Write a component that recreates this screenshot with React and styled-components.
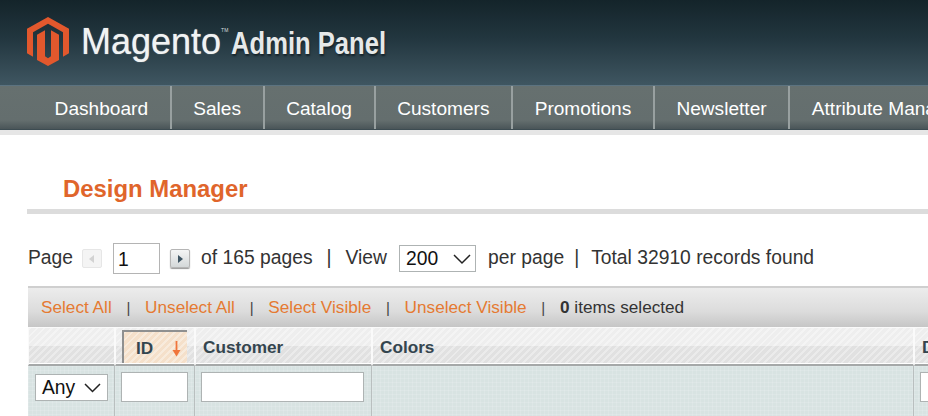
import React from 'react';
import styled, { createGlobalStyle } from 'styled-components';

const GlobalStyle = createGlobalStyle`
  html, body {
    margin: 0;
    padding: 0;
    background: #fff;
    overflow: hidden;
  }
  body {
    font-family: "Liberation Sans", Arial, sans-serif;
    color: #2f2f2f;
  }
`;

const Page = styled.div`
  width: 928px;
  height: 416px;
  overflow: hidden;
`;

const Header = styled.header`
  display: flex;
  align-items: flex-start;
  height: 86px;
  padding: 17px 0 0 27px;
  box-sizing: border-box;
  background: linear-gradient(180deg, #14242a 0%, #22363f 45%, #3f5661 100%);
  border-bottom: 1px solid #5c7380;
`;

const LogoMark = styled.svg`
  width: 42px;
  height: 49px;
  flex: none;
`;

const Brand = styled.span`
  margin: 3px 0 0 12px;
  font-size: 36px;
  line-height: 44px;
  color: #f1f3f3;
  text-shadow: 0 0 1px rgba(255, 255, 255, 0.7);
`;

const Tm = styled.sup`
  font-size: 5px;
  line-height: 0;
  vertical-align: 22px;
  color: #d7dcdc;
  text-shadow: none;
`;

const Product = styled.span`
  display: inline-block;
  margin: 4px 0 0 3px;
  font-weight: 700;
  font-size: 32px;
  line-height: 44px;
  color: #e6e9e9;
  text-shadow: 1px 2px 2px #16232a;
  white-space: nowrap;
  transform: scaleX(0.8);
  transform-origin: left center;
`;

const Nav = styled.nav`
  display: flex;
  height: 44px;
  padding-left: 33px;
  box-sizing: border-box;
  background: linear-gradient(180deg, #66706f 0%, #646e6e 80%, #4a5558 100%);
  border-bottom: 1px solid #3d4c52;
  overflow: hidden;
`;

const NavItem = styled.div`
  flex: none;
  padding: 0 21.6px;
  line-height: 45px;
  font-size: 19.1px;
  color: #fff;
  white-space: nowrap;
  border-right: ${({ $last }) => ($last ? '0' : '2px solid #98a0a0')};
`;

const Strip = styled.div`
  height: 5px;
  background: #e6e6e6;
`;

const Content = styled.main`
  padding: 38px 0 0 27px;
`;

const TitleBar = styled.div`
  height: 36px;
  padding-left: 36px;
  border-bottom: 5px solid #dcdcdc;
`;

const Title = styled.h1`
  margin: 0;
  font-size: 23.9px;
  line-height: 32px;
  font-weight: 700;
  color: #e0652b;
`;

const Pager = styled.div`
  display: flex;
  align-items: center;
  height: 31px;
  margin-top: 29px;
  padding-left: 1px;
  font-size: 19.3px;
  color: #333;
  white-space: nowrap;
`;

const PagerText = styled.span`
  margin-left: ${({ $left }) => $left || 0}px;
  position: relative;
  top: -1px;
`;

const PageButton = styled.div`
  display: flex;
  align-items: center;
  justify-content: center;
  width: 20px;
  height: 19px;
  margin-left: ${({ $left }) => $left}px;
  box-sizing: border-box;
  border: 1px solid ${({ $disabled }) => ($disabled ? '#e6e6e6' : '#b5b5b5')};
  border-radius: 2px;
  background: ${({ $disabled }) =>
    $disabled ? '#f4f4f4' : 'linear-gradient(180deg, #f4f5f5, #d4d8d9)'};
  box-shadow: ${({ $disabled }) => ($disabled ? 'none' : '0 1px 1px #999')};
`;

const Triangle = styled.svg`
  width: 8px;
  height: 8px;
`;

const PageInput = styled.div`
  width: 47px;
  height: 31px;
  margin-left: 11px;
  padding-left: 4px;
  box-sizing: border-box;
  border: 1px solid #b4b4b4;
  font-size: 19.3px;
  line-height: 31px;
  color: #111;
`;

const Select = styled.div`
  display: flex;
  align-items: center;
  justify-content: space-between;
  width: ${({ $width }) => $width}px;
  height: 27px;
  margin-left: ${({ $left }) => $left || 0}px;
  padding: 0 ${({ $pad }) => $pad}px 0 6px;
  box-sizing: border-box;
  border: 1px solid #aeb3b3;
  background: #fff;
  font-size: 19.3px;
  color: #111;
`;

const Chevron = styled.svg`
  width: ${({ $small }) => ($small ? 17 : 20)}px;
  height: 12px;
  flex: none;
`;

const Table = styled.section`
  display: grid;
  grid-template-columns: 87px 80px 177px 542px 1fr;
  grid-template-rows: 41px 39px 52px;
  margin-top: 12px;
  margin-left: 1px;
`;

const Toolbar = styled.div`
  grid-column: 1 / -1;
  display: flex;
  align-items: center;
  padding: 0 0 0 13px;
  box-sizing: border-box;
  gap: 14.75px;
  border-top: 2px solid #cfcfcf;
  background: linear-gradient(180deg, #ececec 0%, #dcdcdc 60%, #c6c6c6 100%);
  font-size: 17.2px;
  white-space: nowrap;
`;

const ToolLink = styled.span`
  color: #e57a32;
`;

const Sep = styled.span`
  color: #444;
  font-size: 15px;
`;

const Count = styled.span`
  color: #333;
  b {
    font-weight: 700;
  }
`;

const hatch = `repeating-linear-gradient(135deg, rgba(255,255,255,.35) 0 2px, rgba(255,255,255,0) 2px 5px)`;

const HeadCell = styled.div`
  display: flex;
  align-items: center;
  padding: 3px ${({ $first }) => ($first ? 0 : 7)}px 0;
  box-sizing: border-box;
  border: 1px solid #fafafa;
  border-bottom: 2px solid #a5a8a8;
  box-shadow: inset 0 -1px 0 #fff;
  background: ${hatch}, linear-gradient(180deg, #eeeeee 0 50%, #e1e1e1 50% 100%);
  font-size: 17.2px;
  font-weight: 700;
  color: #34454f;
  white-space: nowrap;
  overflow: hidden;
`;

const SortCell = styled(HeadCell)`
  padding: 2px 7px 1px 6px;
`;

const SortBox = styled.div`
  display: flex;
  align-items: center;
  justify-content: space-between;
  width: 100%;
  height: 100%;
  padding: 2px 6px 0 12px;
  box-sizing: border-box;
  border-top: 2px solid #8f9090;
  border-left: 2px solid #8f9090;
  background: ${hatch}, #f5e0ca;
`;

const SortArrow = styled.svg`
  width: 9px;
  height: 16px;
  flex: none;
`;

const FilterCell = styled.div`
  display: flex;
  align-items: flex-start;
  padding: ${({ $top }) => $top || 6}px 0 0 ${({ $left }) => $left || 6}px;
  box-sizing: border-box;
  border-right: ${({ $last }) => ($last ? '0' : '1px solid #b9bfbf')};
  background-color: #d8e3e2;
  background-image:
    linear-gradient(rgba(255, 255, 255, 0.12) 1px, transparent 1px),
    linear-gradient(90deg, rgba(255, 255, 255, 0.12) 1px, transparent 1px);
  background-size: 4px 4px;
`;

const FilterInput = styled.div`
  width: ${({ $width }) => $width}px;
  height: 30px;
  box-sizing: border-box;
  border: 1px solid #aeb3b3;
  background: #fff;
`;

const Arrow = ({ small }) => (
  <Chevron $small={small} viewBox={small ? '0 0 17 12' : '0 0 20 12'}>
    <path
      d={small ? 'M1 2 L8.5 9.5 L16 2' : 'M2 2 L10 10 L18 2'}
      fill="none"
      stroke="#222"
      strokeWidth="1.5"
    />
  </Chevron>
);

const navItems = ['Dashboard', 'Sales', 'Catalog', 'Customers', 'Promotions', 'Newsletter', 'Attribute Management'];
const toolLinks = ['Select All', 'Unselect All', 'Select Visible', 'Unselect Visible'];

const App = () => (
  <Page>
    <GlobalStyle />
    <Header>
      <LogoMark viewBox="0 0 42 50" preserveAspectRatio="none">
        <path fill="#e2582d" d="M21 0 L0 12 V37 L6 40.5 V15.5 L21 7 L36 15.5 V40.5 L42 37 V12 Z" />
        <path fill="#e2582d" d="M21 50 L10 44 V18 L18 13.5 V40 L21 42 L24 40 V13.5 L32 18 V44 Z" />
      </LogoMark>
      <Brand>Magento<Tm>TM</Tm></Brand>
      <Product>Admin Panel</Product>
    </Header>
    <Nav>
      {navItems.map((item, i) => (
        <NavItem key={item} $last={i === navItems.length - 1}>{item}</NavItem>
      ))}
    </Nav>
    <Strip />
    <Content>
      <TitleBar>
        <Title>Design Manager</Title>
      </TitleBar>
      <Pager>
        <PagerText>Page</PagerText>
        <PageButton $left={9} $disabled>
          <Triangle viewBox="0 0 8 8"><path d="M6 0 V8 L1 4 Z" fill="#d2d2d2" /></Triangle>
        </PageButton>
        <PageInput>1</PageInput>
        <PageButton $left={10}>
          <Triangle viewBox="0 0 8 8"><path d="M2 0 V8 L7 4 Z" fill="#3e5563" /></Triangle>
        </PageButton>
        <PagerText $left={11}>of 165 pages</PagerText>
        <PagerText $left={14}>|</PagerText>
        <PagerText $left={14}>View</PagerText>
        <Select $width={77} $left={12} $pad={3}>200<Arrow /></Select>
        <PagerText $left={12}>per page</PagerText>
        <PagerText $left={10}>|</PagerText>
        <PagerText $left={12}>Total 32910 records found</PagerText>
      </Pager>
      <Table>
        <Toolbar>
          {toolLinks.map((link) => (
            <React.Fragment key={link}>
              <ToolLink>{link}</ToolLink>
              <Sep>|</Sep>
            </React.Fragment>
          ))}
          <Count><b>0</b> items selected</Count>
        </Toolbar>
        <HeadCell $first />
        <SortCell>
          <SortBox>
            ID
            <SortArrow viewBox="0 0 9 16">
              <path d="M4.5 0 V11" stroke="#f0743a" strokeWidth="1.8" />
              <path d="M0.5 9 H8.5 L4.5 15.5 Z" fill="#f0743a" />
            </SortArrow>
          </SortBox>
        </SortCell>
        <HeadCell>Customer</HeadCell>
        <HeadCell>Colors</HeadCell>
        <HeadCell>Date</HeadCell>
        <FilterCell $top={8} $left={7}>
          <Select $width={73} $pad={6}>Any<Arrow small /></Select>
        </FilterCell>
        <FilterCell>
          <FilterInput $width={67} />
        </FilterCell>
        <FilterCell>
          <FilterInput $width={163} />
        </FilterCell>
        <FilterCell />
        <FilterCell $last>
          <FilterInput $width={80} />
        </FilterCell>
      </Table>
    </Content>
  </Page>
);

export default App;
